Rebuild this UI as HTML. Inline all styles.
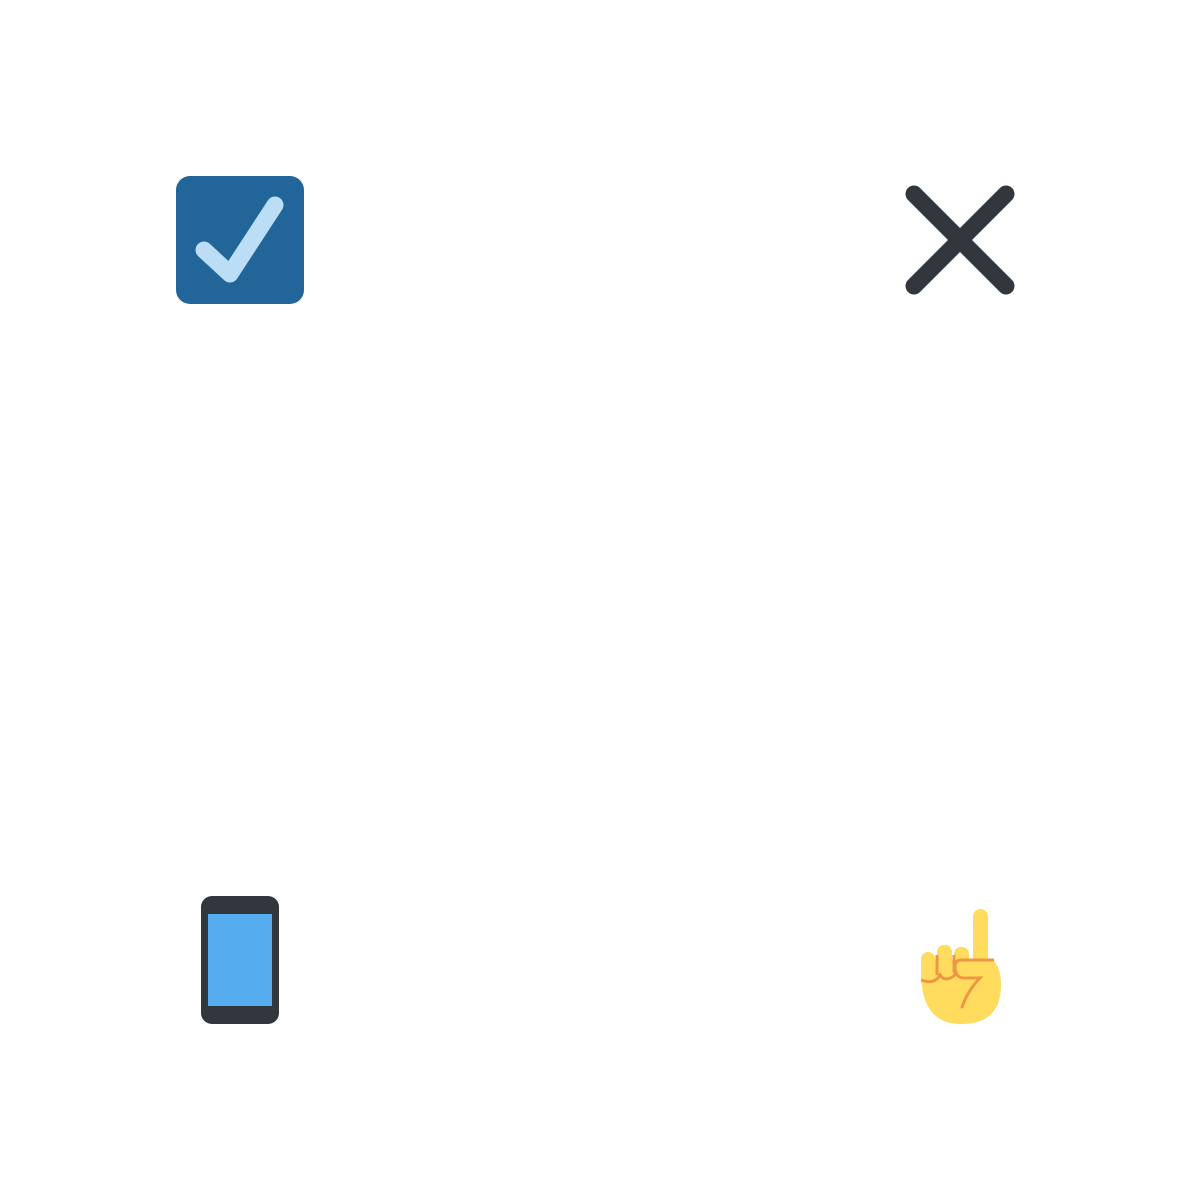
<!DOCTYPE html>
<html><head><meta charset="utf-8"><style>html,body{margin:0;background:#fff;width:1200px;height:1200px;overflow:hidden}</style></head>
<body>
<svg width="1200" height="1200" viewBox="0 0 1200 1200" xmlns="http://www.w3.org/2000/svg">
<rect x="176" y="176" width="128" height="128" rx="14" fill="#226699"/>
<polyline points="204,250 230,274 275,205" fill="none" stroke="#bbddf5" stroke-width="17" stroke-linecap="round" stroke-linejoin="round"/>
<g stroke="#31373d" stroke-width="17" stroke-linecap="round">
<line x1="914" y1="194" x2="1006" y2="286"/><line x1="1006" y1="194" x2="914" y2="286"/>
</g>
<rect x="201" y="896" width="78" height="128" rx="11" fill="#31373d"/>
<rect x="208" y="914" width="64" height="92" fill="#55acee"/>
<g>
<rect x="973" y="909" width="15" height="60" rx="7.5" fill="#ffdc5d"/>
<path d="M921 972 Q921 1024 961 1024 Q1001 1024 1001 985 Q1001 968 993 960 L921 960 Z" fill="#ffdc5d"/>
<rect x="921" y="952" width="14" height="32" rx="7" fill="#ffdc5d"/>
<rect x="937" y="945" width="15" height="35" rx="7" fill="#ffdc5d"/>
<rect x="954" y="947" width="15" height="30" rx="7" fill="#ffdc5d"/>
<path d="M921 980 Q935 985 940 975 Q945 983 955 975 L955 966 Q955 960 962 960 L994 960" fill="none" stroke="#ef9645" stroke-width="3"/>
<path d="M937 955 L937 975 M954 955 L954 972" fill="none" stroke="#ef9645" stroke-width="3"/>
<path d="M955 968 Q956 978 964 978 L980 978 Q968 990 962 1007" fill="none" stroke="#ef9645" stroke-width="3" stroke-linecap="round"/>
</g>
</svg>
</body></html>
